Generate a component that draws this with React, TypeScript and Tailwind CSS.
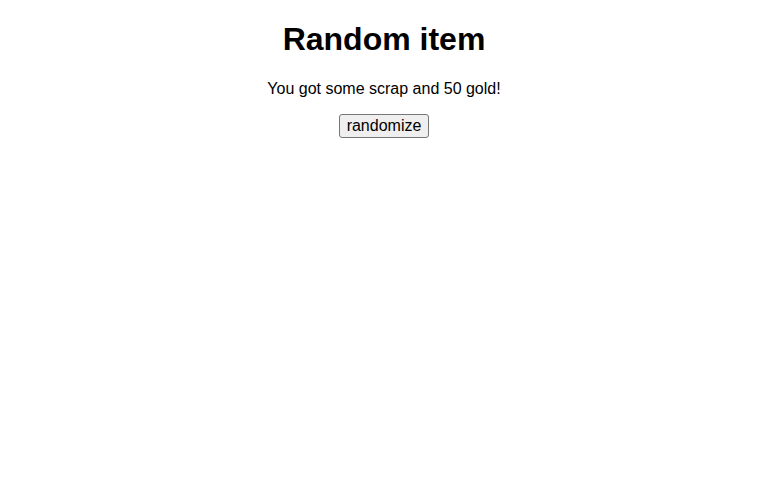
export default function App() {
  return (
    <div className="text-center text-black bg-white" style={{ fontFamily: '"Liberation Sans", Arial, sans-serif' }}>
      <div className="h-[21px]" />
      <h1 className="text-[32px] font-bold leading-[37px]">Random item</h1>
      <p className="mt-[22px] text-base leading-[18px]">You got some scrap and 50 gold!</p>
      <button className="mt-4 px-[7px] py-[2px] text-base leading-[18px] bg-[#efefef] border border-[#767676] rounded-[3px] text-black">
        randomize
      </button>
    </div>
  );
}
